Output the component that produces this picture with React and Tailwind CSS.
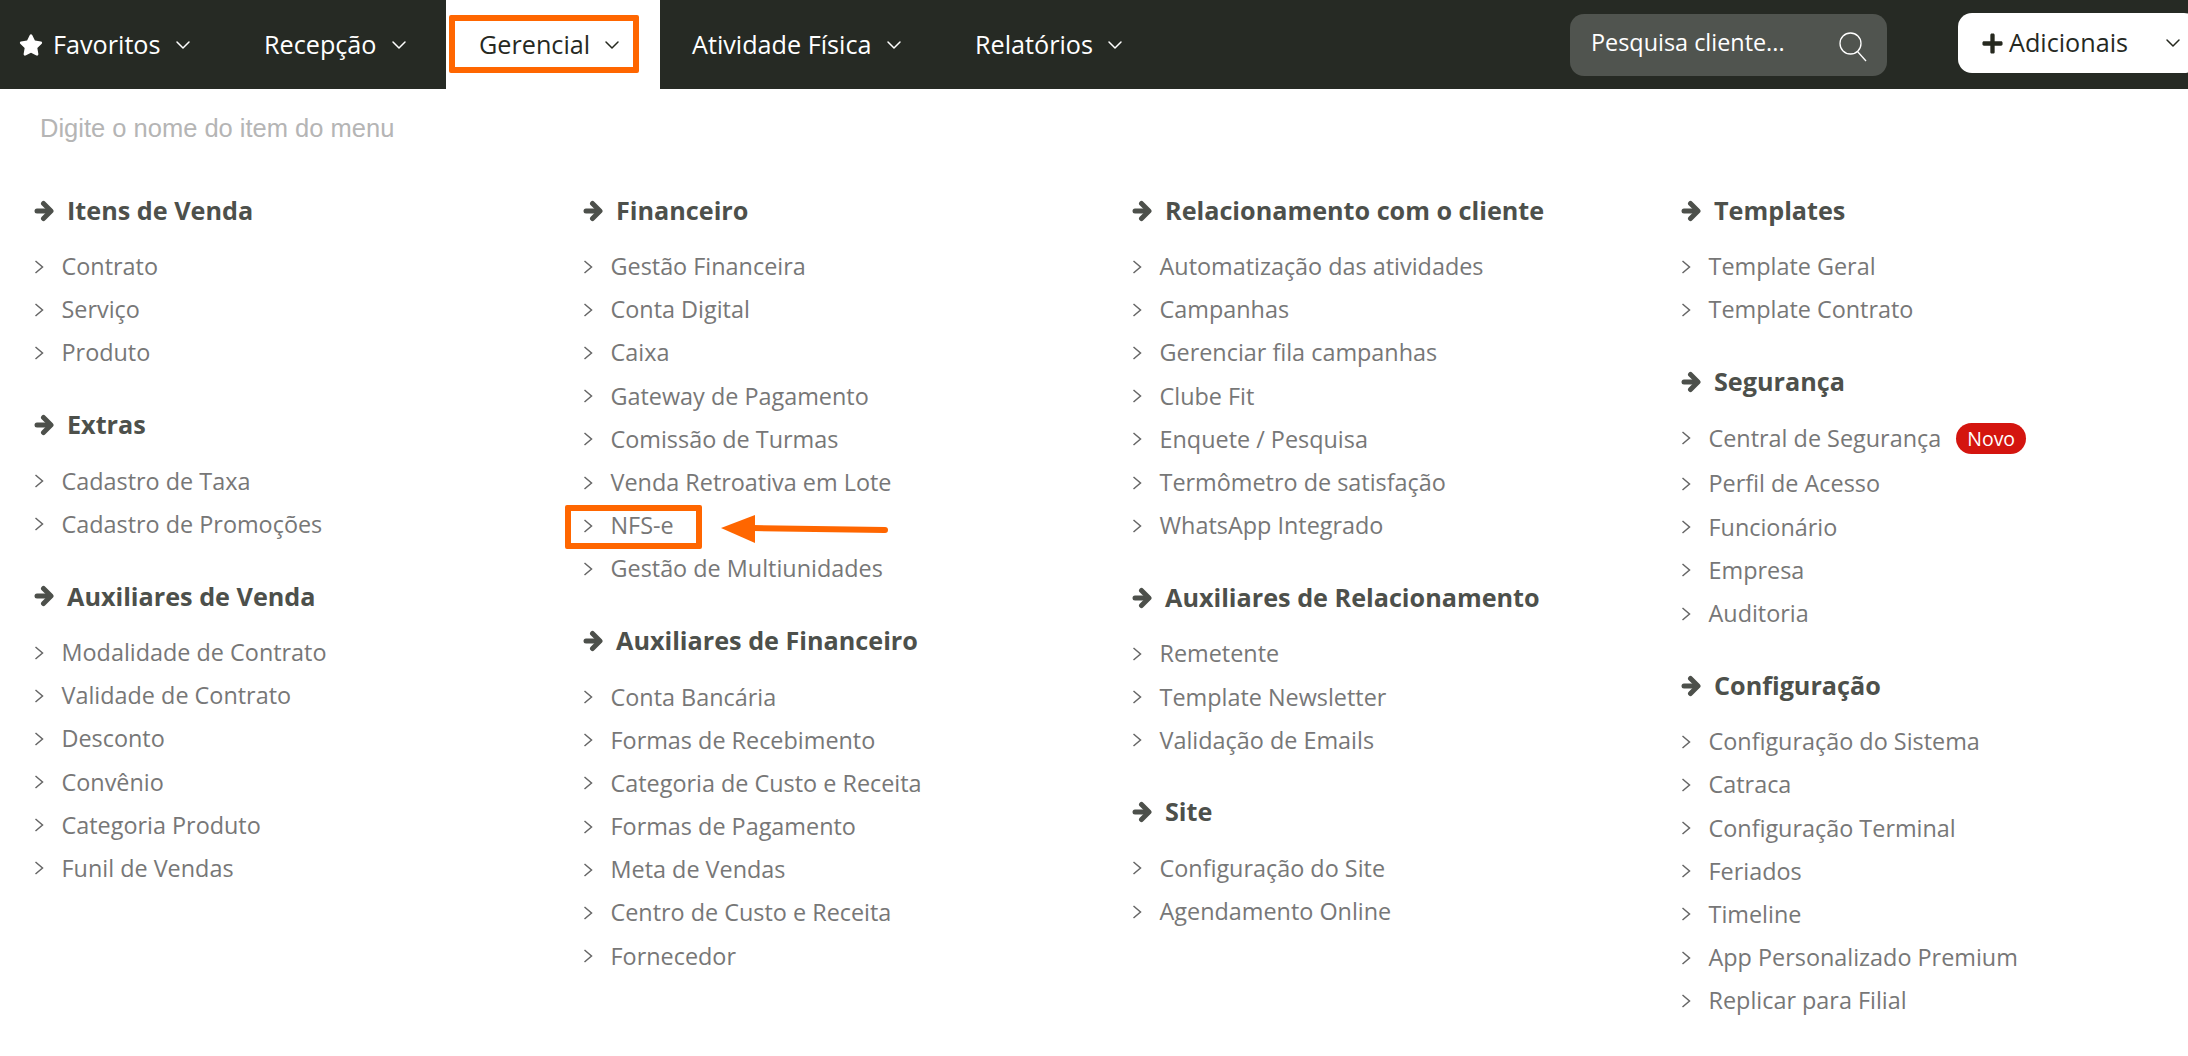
import React from "react";
import { FaStar, FaPlus } from "react-icons/fa";
import { ChevronDown } from "lucide-react";

const columns = [
  [
    ["Itens de Venda", ["Contrato", "Serviço", "Produto"]],
    ["Extras", ["Cadastro de Taxa", "Cadastro de Promoções"]],
    ["Auxiliares de Venda", ["Modalidade de Contrato", "Validade de Contrato", "Desconto", "Convênio", "Categoria Produto", "Funil de Vendas"]],
  ],
  [
    ["Financeiro", ["Gestão Financeira", "Conta Digital", "Caixa", "Gateway de Pagamento", "Comissão de Turmas", "Venda Retroativa em Lote", "NFS-e", "Gestão de Multiunidades"]],
    ["Auxiliares de Financeiro", ["Conta Bancária", "Formas de Recebimento", "Categoria de Custo e Receita", "Formas de Pagamento", "Meta de Vendas", "Centro de Custo e Receita", "Fornecedor"]],
  ],
  [
    ["Relacionamento com o cliente", ["Automatização das atividades", "Campanhas", "Gerenciar fila campanhas", "Clube Fit", "Enquete / Pesquisa", "Termômetro de satisfação", "WhatsApp Integrado"]],
    ["Auxiliares de Relacionamento", ["Remetente", "Template Newsletter", "Validação de Emails"]],
    ["Site", ["Configuração do Site", "Agendamento Online"]],
  ],
  [
    ["Templates", ["Template Geral", "Template Contrato"]],
    ["Segurança", ["Central de Segurança", "Perfil de Acesso", "Funcionário", "Empresa", "Auditoria"]],
    ["Configuração", ["Configuração do Sistema", "Catraca", "Configuração Terminal", "Feriados", "Timeline", "App Personalizado Premium", "Replicar para Filial"]],
  ],
];

function NavItem({ label, className, star, dark }) {
  return (
    <div className={`flex h-full shrink-0 items-center text-[25.2px] ${className}`}>
      {star && <FaStar className="mr-[10px] text-white" size={24} />}
      <span className={dark ? "text-[#26291f]" : "text-white"}>{label}</span>
      <ChevronDown size={24} strokeWidth={1.5} className={`ml-[10px] ${dark ? "text-[#26291f]" : "text-white"}`} />
    </div>
  );
}

function Section({ title, items }) {
  return (
    <div className="mb-[29px]">
      <div className="flex h-[43px] items-center text-[25.2px] font-bold text-[#4d504b]">
        <svg width="20" height="22" viewBox="0 0 20 22" fill="none" stroke="#4d504b" strokeWidth="5" strokeLinecap="round" strokeLinejoin="round" className="mr-[13px] shrink-0">
          <path d="M3 11 H16" />
          <path d="M9.5 3.5 L17 11 L9.5 18.5" />
        </svg>
        <span>{title}</span>
      </div>
      <ul className="mt-[13px]">
        {items.map((item) => {
          const badge = item === "Central de Segurança";
          return (
            <li key={item} className={`flex items-center text-[23.4px] text-[#777] ${badge ? "h-[46px] pb-[2px]" : "h-[43.2px]"}`}>
              <svg width="10" height="14" viewBox="0 0 10 14" fill="none" stroke="#666" strokeWidth="1.5" className="mr-[17.5px] shrink-0">
                <path d="M1.5 1 L8.5 7 L1.5 13" />
              </svg>
              <span>{item}</span>
              {badge && (
                <span className="ml-[15px] rounded-full bg-[#d4150f] px-[11px] text-[19.5px] leading-[31px] text-white">Novo</span>
              )}
            </li>
          );
        })}
      </ul>
    </div>
  );
}

export default function App() {
  return (
    <div className="relative h-[1056px] w-[2188px] overflow-hidden bg-white font-['Open_Sans',sans-serif]">
      <nav className="flex h-[89px] items-center bg-[#262a24]">
        <NavItem label="Favoritos" star className="w-[225px] pl-[19px]" />
        <NavItem label="Recepção" className="w-[221px] pl-[39px]" />
        <NavItem label="Gerencial" dark className="w-[214px] bg-white pl-[33px]" />
        <NavItem label="Atividade Física" className="w-[283px] pl-[32px]" />
        <NavItem label="Relatórios" className="w-[627px] pl-[32px]" />
        <div className="flex h-[62px] w-[317px] shrink-0 items-center justify-between rounded-[14px] bg-[#50544f] pl-[21px] pr-[20px] text-[23.4px] text-white">
          <span className="mt-[-3px]">Pesquisa cliente...</span>
          <svg width="28" height="30" viewBox="0 0 28 30" fill="none" stroke="#fff" strokeWidth="1.3" className="mt-[4px]">
            <circle cx="11.5" cy="11.5" r="10.5" />
            <line x1="18.5" y1="19.5" x2="27" y2="29" />
          </svg>
        </div>
        <div className="ml-[71px] mt-[-3px] flex h-[60px] w-[240px] shrink-0 items-center rounded-[14px] bg-white pl-[23px] text-[25.2px] text-[#26291f]">
          <FaPlus size={23} className="mr-[5px]" />
          <span>Adicionais</span>
          <ChevronDown size={24} strokeWidth={1.5} className="ml-[33px]" />
        </div>
      </nav>

      <div className="pl-[40px] pt-[23px] font-['Liberation_Sans',sans-serif] text-[25.5px] leading-[32px] text-[#b5b5b5]">
        Digite o nome do item do menu
      </div>

      <div className="grid grid-cols-[549px_549px_549px_507px] pl-[34px] pt-[45px]">
        {columns.map((sections, i) => (
          <div key={i}>
            {sections.map(([title, items]) => (
              <Section key={title} title={title} items={items} />
            ))}
          </div>
        ))}
      </div>

      <div className="absolute left-[449px] top-[15px] h-[58px] w-[190px] rounded-[2px] border-[6px] border-[#ff6600]" />
      <div className="absolute left-[565px] top-[505px] h-[44px] w-[137px] rounded-[2px] border-[6px] border-[#ff6600]" />
      <svg className="absolute left-[720px] top-[510px]" width="170" height="40" viewBox="0 0 170 40">
        <path d="M1 18 L35 5 L35 33 Z" fill="#ff6600" />
        <path d="M33 18 L165 20" stroke="#ff6600" strokeWidth="6" strokeLinecap="round" />
      </svg>
    </div>
  );
}
